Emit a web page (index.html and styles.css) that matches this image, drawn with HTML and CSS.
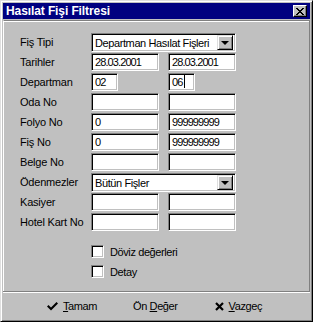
FILE: index.html
```html
<!DOCTYPE html>
<html lang="tr">
<head>
    <meta charset="UTF-8">
    <title>Hasılat Fişi Filtresi</title>
    <link rel="stylesheet" href="styles.css">
</head>
<body>
    <div class="window">
        <div class="titlebar">
            <span class="title">Hasılat Fişi Filtresi</span>
            <span class="closeBtn">
                <svg width="8" height="7" viewBox="0 0 8 7"><path d="M0 0h2v1h1v1h2V1h1V0h2v1H7v1H6v1H5v1h1v1h1v1h1v1H6V6H5V5H3v1H2v1H0V6h1V5h1V4h1V3H2V2H1V1H0z" fill="#000"/></svg>
            </span>
        </div>

        <div class="panel">
            <div class="form">
                <label class="lbl">Fiş Tipi</label>
                <div class="combo wide first">
                    <span class="comboText">Departman Hasılat Fişleri</span>
                    <span class="dropBtn"><i class="arrow"></i></span>
                </div>

                <label class="lbl">Tarihler</label>
                <div class="field num">28.03.2001</div>
                <div class="field num col2">28.03.2001</div>

                <label class="lbl">Departman</label>
                <div class="field num short">02</div>
                <div class="field num short col2">06<i class="caret"></i></div>

                <label class="lbl">Oda No</label>
                <div class="field"></div>
                <div class="field col2"></div>

                <label class="lbl">Folyo No</label>
                <div class="field num">0</div>
                <div class="field num col2">999999999</div>

                <label class="lbl">Fiş No</label>
                <div class="field num">0</div>
                <div class="field num col2">999999999</div>

                <label class="lbl">Belge No</label>
                <div class="field"></div>
                <div class="field col2"></div>

                <label class="lbl">Ödenmezler</label>
                <div class="combo wide">
                    <span class="comboText">Bütün Fişler</span>
                    <span class="dropBtn"><i class="arrow"></i></span>
                </div>

                <label class="lbl">Kasiyer</label>
                <div class="field"></div>
                <div class="field col2"></div>

                <label class="lbl">Hotel Kart No</label>
                <div class="field"></div>
                <div class="field col2"></div>
            </div>

            <div class="checks">
                <div class="checkRow"><span class="box"></span>Döviz değerleri</div>
                <div class="checkRow"><span class="box"></span>Detay</div>
            </div>
        </div>

        <div class="buttons">
            <a class="btn btnOk">
                <svg width="11" height="9" viewBox="0 0 11 9"><path d="M0 4.5l1.5-1.5 2.5 2.5 5.5-5.5 1.5 1.5-7 7z" fill="#000"/></svg>
                <span><u>T</u>amam</span>
            </a>
            <a class="btn btnDef"><span>Ön <u>D</u>eğer</span></a>
            <a class="btn btnCancel">
                <svg width="9" height="9" viewBox="0 0 9 9"><path d="M1 1l7 7M8 1l-7 7" stroke="#000" stroke-width="2.2"/></svg>
                <span><u>V</u>azgeç</span>
            </a>
        </div>
    </div>
</body>
</html>
```

FILE: styles.css
```css
body {
    margin: 0;
    padding: 0;
    background-color: #c0c0c0;
    font-family: "Liberation Sans", Arial, sans-serif;
    font-size: 11px;
    letter-spacing: -0.4px;
    color: #000;
}

.window {
    box-sizing: border-box;
    width: 313px;
    height: 322px;
    background-color: #c0c0c0;
    border-top: 1px solid #dfdfdf;
    border-left: 1px solid #dfdfdf;
    border-right: 1px solid #000;
    border-bottom: 1px solid #000;
    box-shadow: inset 1px 1px 0 #fff, inset -1px -1px 0 #808080;
    padding: 2px;
    display: flex;
    flex-direction: column;
}

.titlebar {
    height: 16px;
    background-color: #000080;
    color: #fff;
    display: flex;
    align-items: center;
    justify-content: space-between;
    padding: 0 3px 0 3px;
}

.title {
    font-weight: bold;
    font-size: 12px;
    letter-spacing: -0.1px;
}

.closeBtn {
    box-sizing: border-box;
    width: 14px;
    height: 12px;
    background-color: #c0c0c0;
    border-top: 1px solid #fff;
    border-left: 1px solid #fff;
    border-right: 1px solid #000;
    border-bottom: 1px solid #000;
    box-shadow: inset -1px -1px 0 #808080;
    display: flex;
    align-items: center;
    justify-content: center;
    padding-right: 1px;
}

.panel {
    flex: 1;
    border-top: 1px solid #808080;
    border-left: 1px solid #fff;
    border-right: 1px solid #808080;
    margin-top: 1px;
    box-shadow: inset 0 1px 0 #fff;
}

.form {
    display: grid;
    grid-template-columns: 71px 68px 9px 68px;
    grid-auto-rows: 18px;
    row-gap: 2px;
    padding: 12px 0 0 16px;
}

.lbl {
    grid-column: 1;
    display: flex;
    align-items: center;
    white-space: nowrap;
    letter-spacing: -0.2px;
}

.field {
    grid-column: 2;
    box-sizing: border-box;
    height: 18px;
    background-color: #fff;
    border-top: 1px solid #808080;
    border-left: 1px solid #808080;
    border-right: 1px solid #fff;
    border-bottom: 1px solid #fff;
    box-shadow: inset 1px 1px 0 #000, inset -1px -1px 0 #c0c0c0;
    padding: 1px 0 0 3px;
    line-height: 15px;
    white-space: nowrap;
}

.field.num {
    letter-spacing: -0.9px;
}

.field.col2 {
    grid-column: 4;
}

.field.short {
    width: 27px;
}

.caret {
    display: inline-block;
    width: 1px;
    height: 13px;
    background-color: #000;
    vertical-align: -2px;
    margin-left: 2px;
}

.combo {
    grid-column: 2 / 5;
    box-sizing: border-box;
    height: 19px;
    background-color: #fff;
    border-top: 1px solid #808080;
    border-left: 1px solid #808080;
    border-right: 1px solid #fff;
    border-bottom: 1px solid #fff;
    box-shadow: inset 1px 1px 0 #000, inset -1px -1px 0 #c0c0c0;
    display: flex;
    align-items: center;
    justify-content: space-between;
    padding: 2px 2px 2px 3px;
}

.combo.first {
    margin-bottom: 2px;
}

.comboText {
    white-space: nowrap;
}

.dropBtn {
    box-sizing: border-box;
    width: 16px;
    height: 15px;
    background-color: #c0c0c0;
    border-top: 1px solid #dfdfdf;
    border-left: 1px solid #dfdfdf;
    border-right: 1px solid #000;
    border-bottom: 1px solid #000;
    box-shadow: inset 1px 1px 0 #fff, inset -1px -1px 0 #808080;
    display: flex;
    align-items: center;
    justify-content: center;
}

.arrow {
    width: 0;
    height: 0;
    border-left: 4px solid transparent;
    border-right: 4px solid transparent;
    border-top: 4px solid #000;
}

.checks {
    display: flex;
    flex-direction: column;
    gap: 7px;
    padding: 14px 0 0 87px;
}

.checkRow {
    display: flex;
    align-items: center;
    height: 13px;
}

.box {
    box-sizing: border-box;
    width: 13px;
    height: 13px;
    background-color: #fff;
    border-top: 1px solid #808080;
    border-left: 1px solid #808080;
    border-right: 1px solid #fff;
    border-bottom: 1px solid #fff;
    box-shadow: inset 1px 1px 0 #000, inset -1px -1px 0 #c0c0c0;
    margin-right: 6px;
}

.buttons {
    height: 26px;
    border-top: 1px solid #808080;
    box-shadow: inset 0 1px 0 #fff;
    display: flex;
    align-items: center;
    padding: 1px 0 0 44px;
    gap: 36px;
}

.btn {
    display: flex;
    align-items: center;
    gap: 5px;
    cursor: pointer;
}

.btnCancel {
    margin-left: 1px;
}
```
